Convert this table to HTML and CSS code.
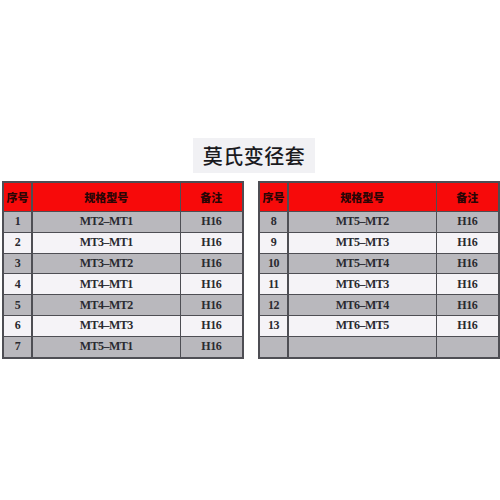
FILE: index.html
```html
<!DOCTYPE html>
<html lang="zh">
<head>
<meta charset="utf-8">
<link rel="stylesheet" href="styles.css">
</head>
<body>
<div class="page">
  <div class="title-row"><h1 class="title">莫氏变径套</h1></div>
  <div class="tables">
    <table class="spec">
      <colgroup><col class="c1"><col class="c2"><col class="c3"></colgroup>
      <thead><tr><th>序号</th><th>规格型号</th><th>备注</th></tr></thead>
      <tbody>
        <tr class="g"><td>1</td><td>MT2–MT1</td><td>H16</td></tr>
        <tr class="w"><td>2</td><td>MT3–MT1</td><td>H16</td></tr>
        <tr class="g"><td>3</td><td>MT3–MT2</td><td>H16</td></tr>
        <tr class="w"><td>4</td><td>MT4–MT1</td><td>H16</td></tr>
        <tr class="g"><td>5</td><td>MT4–MT2</td><td>H16</td></tr>
        <tr class="w"><td>6</td><td>MT4–MT3</td><td>H16</td></tr>
        <tr class="g"><td>7</td><td>MT5–MT1</td><td>H16</td></tr>
      </tbody>
    </table>
    <table class="spec">
      <colgroup><col class="c1"><col class="c2"><col class="c3"></colgroup>
      <thead><tr><th>序号</th><th>规格型号</th><th>备注</th></tr></thead>
      <tbody>
        <tr class="g"><td>8</td><td>MT5–MT2</td><td>H16</td></tr>
        <tr class="w"><td>9</td><td>MT5–MT3</td><td>H16</td></tr>
        <tr class="g"><td>10</td><td>MT5–MT4</td><td>H16</td></tr>
        <tr class="w"><td>11</td><td>MT6–MT3</td><td>H16</td></tr>
        <tr class="g"><td>12</td><td>MT6–MT4</td><td>H16</td></tr>
        <tr class="w"><td>13</td><td>MT6–MT5</td><td>H16</td></tr>
        <tr class="g"><td></td><td></td><td></td></tr>
      </tbody>
    </table>
  </div>
</div>
</body>
</html>
```
FILE: styles.css
```css
html, body {
  margin: 0;
  padding: 0;
  background: #ffffff;
}
.page {
  width: 500px;
  height: 500px;
  padding-top: 138px;
  box-sizing: border-box;
}
.title-row {
  display: flex;
  justify-content: center;
  padding-left: 8px;
}
.title {
  margin: 0;
  width: 122px;
  height: 35px;
  box-sizing: border-box;
  background: #f1f1f4;
  font-family: "Noto Sans CJK SC", "Noto Sans", sans-serif;
  font-size: 20px;
  font-weight: 500;
  line-height: 35px;
  text-align: center;
  color: #1a1a1e;
  letter-spacing: 0.5px;
}
.tables {
  display: flex;
  gap: 14px;
  padding-left: 2px;
  margin-top: 8px;
}
.spec {
  border-collapse: collapse;
  width: 240px;
  flex: 0 0 auto;
  table-layout: fixed;
  border: 2px solid #4e4e54;
  font-family: "Liberation Serif", "Noto Serif CJK SC", serif;
}
.c1 { width: 29px; }
.c2 { width: 148px; }
.c3 { width: 63px; }
.spec th {
  height: 28px;
  padding: 0;
  background: #f70a0a;
  color: #2a0505;
  font-family: "Noto Sans CJK SC", sans-serif;
  font-size: 11px;
  font-weight: 900;
  border: 1px solid #4e4e54;
  text-align: center;
}
.spec td {
  height: 19.8px;
  padding: 0;
  border: 1px solid #4e4e54;
  text-align: center;
  font-size: 12px;
  font-weight: 700;
  letter-spacing: -0.5px;
  color: #2a2a30;
}
.spec tr.g td { background: #b9b8bd; }
.spec tr.w td { background: #f5f3f7; }
.spec td:first-child, .spec th:first-child { border-right-width: 2px; }
```
